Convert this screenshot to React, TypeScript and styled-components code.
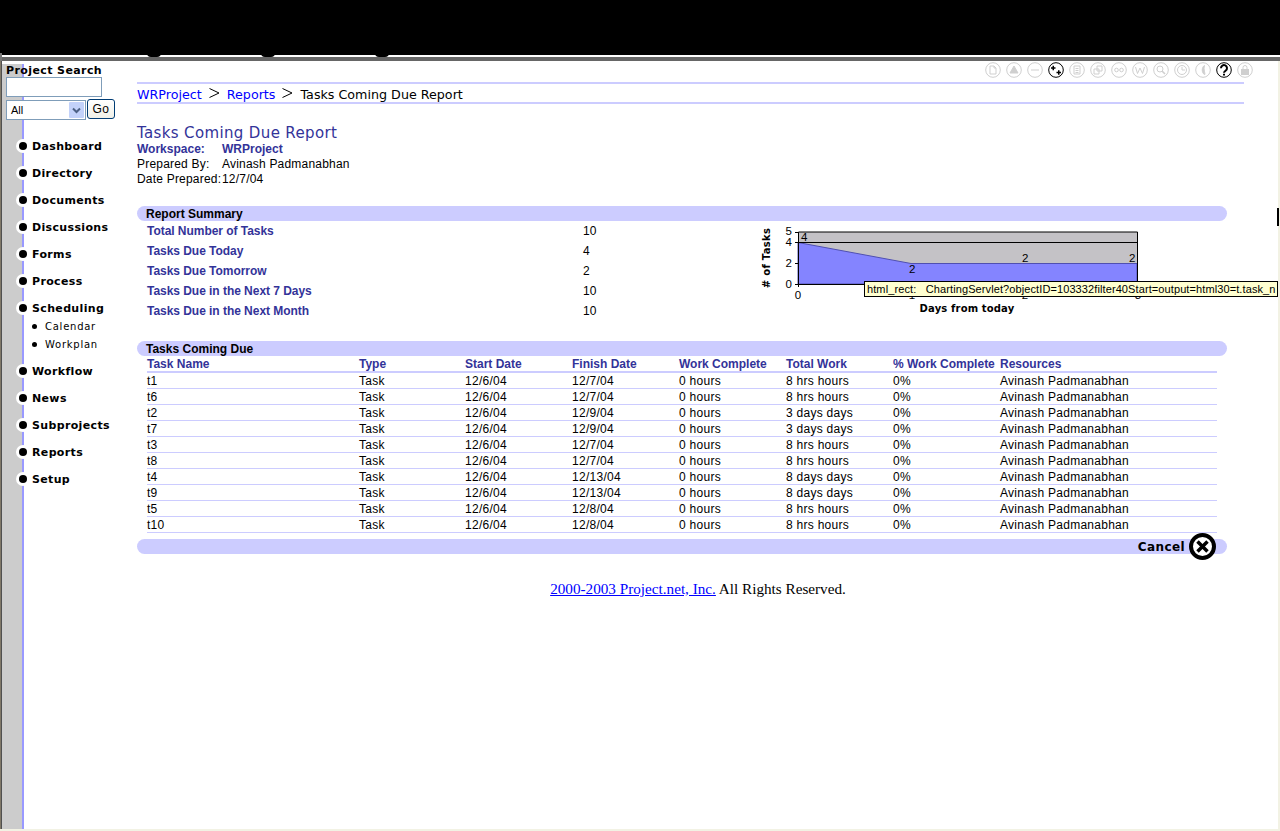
import React from "react";
import styled, { createGlobalStyle } from "styled-components";

const Global = createGlobalStyle`
  html, body { margin: 0; padding: 0; background: #fff; overflow: hidden; }
  * { box-sizing: border-box; }
`;
const verdana = `"DejaVu Sans", Verdana, sans-serif`;
const arial = `"Liberation Sans", Arial, sans-serif`;

const Page = styled.div`
  width: 1280px; height: 831px; display: flex; flex-direction: column; position: relative; overflow: hidden; background: #fff;
`;
const Banner = styled.header`
  height: 61px; flex: none; position: relative;
  background: linear-gradient(#000 55px, #fff 55px 57px, #666 57px);
`;
const Hump = styled.span<{ $x: number }>`
  position: absolute; left: ${p => p.$x}px; top: 53px; width: 14px; height: 4px; background: #000; border-radius: 0 0 7px 7px;
`;
const EdgeStub = styled.span`
  position: absolute; left: 0; top: 53px; width: 2px; height: 8px; background: #777;
`;
const Body = styled.div`
  flex: 1; display: flex; min-height: 0; border-right: 2px solid #f2f2e4; border-bottom: 2px solid #f2f2e4;
`;
const Nav = styled.nav`
  width: 137px; flex: none; padding: 3px 0 0 6px;
  background:
    linear-gradient(90deg, #807868 1px, #505050 1px 2px, transparent 2px),
    linear-gradient(#fff 3px, transparent 3px),
    linear-gradient(90deg, #ccc 22px, #99f 22px 24px, #fff 24px);
`;
const SearchTitle = styled.div`
  font: bold 11px/13px ${verdana}; color: #000; letter-spacing: 0.4px; white-space: nowrap;
`;
const SearchInput = styled.input`
  display: block; width: 96px; height: 20px; border: 1px solid #7f9db9; background: #fff; padding: 0; margin: 0; border-radius: 0; outline: none;
`;
const SearchRow = styled.div`
  display: flex; align-items: flex-start; gap: 1px; margin-top: 2px;
`;
const FakeSelect = styled.div`
  width: 80px; height: 20px; border: 1px solid #7f9db9; background: #fff; display: flex; align-items: center; justify-content: space-between; margin-top: 1px; padding: 1px 0 1px 4px;
  font: 11px ${arial}; color: #000;
`;
const SelectArrow = styled.span`
  width: 15px; height: 16px; margin-right: 1px; background: #c3d2fa; border-radius: 1px; display: flex; align-items: center; justify-content: center;
`;
const GoButton = styled.button`
  width: 28px; height: 20px; padding: 0; border: 1px solid #003c74; border-radius: 3px; background: linear-gradient(#fff, #f0f0e8);
  font: 12px ${arial}; letter-spacing: 0.4px; color: #000;
`;
const NavList = styled.ul`
  list-style: none; margin: 13px 0 0 -6px; padding: 0;
`;
const NavItem = styled.li`
  height: 27px; display: flex; align-items: center; position: relative; padding-left: 32px;
  font: bold 11px ${verdana}; letter-spacing: 0.35px; color: #000; white-space: nowrap;
  &::before { content: ""; position: absolute; left: 16px; top: 6px; width: 14px; height: 14px; border-radius: 50%; background: #fff; }
  &::after { content: ""; position: absolute; left: 19px; top: 9px; width: 8px; height: 8px; border-radius: 50%; background: #000; }
`;
const SubItem = styled.li`
  height: 18px; display: flex; align-items: center; position: relative; padding-left: 45px;
  font: 10px ${verdana}; letter-spacing: 0.75px; color: #000; white-space: nowrap;
  &::after { content: ""; position: absolute; left: 32px; top: 7px; width: 5px; height: 5px; border-radius: 50%; background: #000; }
`;
const SubGroup = styled.div`
  margin-top: -5px; margin-bottom: 5px;
`;
const Main = styled.main`
  flex: 1; min-width: 0; display: flex; flex-direction: column; position: relative;
`;
const IconBar = styled.div`
  height: 21px; width: 1116px; display: flex; justify-content: flex-end; align-items: flex-start; gap: 5px; padding-top: 1px;
`;
const Crumbs = styled.div`
  width: 1107px; height: 22px; border-top: 2px solid #ccf; border-bottom: 2px solid #ccf; display: flex; align-items: center; gap: 7px; padding-top: 2px;
  font: 12.7px ${verdana}; white-space: nowrap;
  color: #000;
`;
const CrumbLink = styled.a`
  color: #00f; text-decoration: none;
`;
const Sep = styled.svg`
  display: block; flex: none; width: 11px; height: 10px; margin-top: -2px; fill: none; stroke: #000;
`;
const Title = styled.h1`
  margin: 20px 0 0; font: 15px/18px ${verdana}; color: #333399; letter-spacing: 0.36px;
`;
const Meta = styled.div`
  display: grid; grid-template-columns: 85px 1fr; grid-auto-rows: 15px; font: 12px/15px ${arial}; margin-top: 0; letter-spacing: 0.2px; margin-bottom: 19px; white-space: nowrap;
`;
const MetaStrong = styled.div`
  font-weight: bold; color: #333399; letter-spacing: 0;
`;
const MetaCell = styled.div`
  color: #000;
`;
const Bar = styled.div`
  width: 1090px; height: 15px; border-radius: 8px; background: #ccf; padding-left: 9px; font: bold 12px/17px ${arial}; color: #000; flex: none; position: relative;
`;
const Summary = styled.section`
  display: flex; height: 120px; width: 1090px; position: relative;
`;
const SummaryList = styled.div`
  padding: 0 0 0 10px; width: 620px; flex: none;
`;
const SummaryRow = styled.div`
  display: grid; grid-template-columns: 436px 1fr; height: 20px; align-items: center; font: 12px/20px ${arial};
  letter-spacing: 0.2px;
`;
const SummaryLabel = styled.div`
  font-weight: bold; color: #333399; letter-spacing: -0.04px;
`;
const ChartBox = styled.div`
  position: relative; flex: none; margin-top: 3px;
`;
const Tip = styled.div`
  position: absolute; left: 107px; top: 57px; width: 414px; height: 16px; background: #ffffd0; border: 1px solid #000;
  font: 11px/14px ${arial}; letter-spacing: 0.1px; color: #000; padding-left: 2px; white-space: pre; overflow: hidden;
`;
const Grid = styled.div`
  margin-left: 10px; width: 1070px; display: grid; grid-template-columns: 212px 106px 107px 107px 107px 107px 107px 1fr;
`;
const HeadCell = styled.div`
  font: bold 12px/16px ${arial}; color: #333399; height: 17px; border-bottom: 2px solid #ccf; white-space: nowrap;
`;
const Cell = styled.div`
  font: 12px/17px ${arial}; letter-spacing: 0.27px; color: #000; height: 16px; border-bottom: 1px solid #ccf; white-space: nowrap;
`;
const CancelBar = styled(Bar)`
  margin-top: 6px; padding: 0;
`;
const CancelLink = styled.div`
  position: absolute; right: 11px; top: -6px; display: flex; align-items: flex-start; gap: 4px;
  font: bold 12px/29px ${verdana}; letter-spacing: 0.4px; color: #000;
`;
const Footer = styled.footer`
  width: 1122px; margin-top: 26px; text-align: center; font: 15.2px/18px "Liberation Serif", "Times New Roman", serif; color: #000;
`;
const FootLink = styled.a`
  color: #00f; text-decoration: underline;
`;
const Caret = styled.span`
  position: absolute; left: 1277px; top: 208px; width: 2px; height: 18px; background: #000;
`;

const S = styled.svg`
  display: block; flex: none; width: 16px; height: 16px; fill: none; stroke: currentColor;
`;
const IconWrap = styled.span<{ $on?: boolean }>`
  display: block; color: ${p => (p.$on ? "#000" : "#cfcfcf")};
`;
const glyphs: React.ReactNode[] = [
  <path d="M5 4h4l2 2v6H5zM9 4v2h2" />,
  <path d="M8 4l4 7H4z" fill="currentColor" />,
  <path d="M4 8h8" />,
  <path d="M3 6h4.500M5.250 3.700v4.600M8.500 10.500h4.500M10.750 8.200v4.600" strokeWidth="1.5" />,
  <path d="M5 4h6v8H5zM6.500 6.500h3M6.500 8.500h3M6.500 10.500h3" />,
  <path d="M7 4h5v5H7zM4 7h5v5H4z" />,
  <><circle cx="5.500" cy="8" r="1.800" /><circle cx="10.500" cy="8" r="1.800" /></>,
  <path d="M3.500 5l2 6.500L8 6l2.500 5.500L12.500 5" />,
  <><circle cx="7" cy="7" r="3" /><path d="M9 9l3 3" strokeWidth="1.600" /></>,
  <><circle cx="8" cy="8" r="4.500" /><path d="M8 5v3h3" /></>,
  <path d="M9.500 3.500C6.500 5 6.500 11 9.500 12.500C11 13 8 8 9.500 3.500Z" fill="currentColor" />,
  <path d="M5 6.200a3 3 0 1 1 4.800 2.300C8.500 9.500 8 9.800 8 10.800M8 11.800v1.700" strokeWidth="2" />,
  <><rect x="4.500" y="7.500" width="7" height="5" fill="currentColor" /><path d="M6 7.500V5.500a2 2 0 0 1 4 0v2" /></>,
];
const activeIcons = [3, 11];

const rows = [
  ["t1", "12/7/04", "8 hrs hours"], ["t6", "12/7/04", "8 hrs hours"], ["t2", "12/9/04", "3 days days"], ["t7", "12/9/04", "3 days days"],
  ["t3", "12/7/04", "8 hrs hours"], ["t8", "12/7/04", "8 hrs hours"], ["t4", "12/13/04", "8 days days"], ["t9", "12/13/04", "8 days days"],
  ["t5", "12/8/04", "8 hrs hours"], ["t10", "12/8/04", "8 hrs hours"],
];
const heads = ["Task Name", "Type", "Start Date", "Finish Date", "Work Complete", "Total Work", "% Work Complete", "Resources"];
const summary: [string, string][] = [
  ["Total Number of Tasks", "10"], ["Tasks Due Today", "4"], ["Tasks Due Tomorrow", "2"], ["Tasks Due in the Next 7 Days", "10"], ["Tasks Due in the Next Month", "10"],
];

const Chart = () => (
  <svg width="400" height="90" viewBox="0 0 400 90" style={{ display: "block" }}>
    <g transform="translate(-757,-224)">
      <rect x="798" y="232" width="339" height="52" fill="#c4c2c6" />
      <path d="M798 242.500L911 263.500H1137V284H798Z" fill="#8484ff" stroke="#5050b0" strokeWidth="1" />
      <path d="M798 242.500H1137" stroke="#000" />
      <path d="M798.500 232V284.500H1137.500V232H798.500" stroke="#000" fill="none" />
      <path d="M795 232.500h4M795 242.500h4M795 263.500h4M795 284.500h4M798.500 284v3M911.500 284v3M1024.500 284v3M1137.500 284v3" stroke="#000" />
      <g fontFamily="Liberation Sans" fontSize="11.500" fill="#000">
        <text x="792" y="235" textAnchor="end">5</text>
        <text x="792" y="246" textAnchor="end">4</text>
        <text x="792" y="267" textAnchor="end">2</text>
        <text x="792" y="288" textAnchor="end">0</text>
        <text x="798" y="299" textAnchor="middle">0</text>
        <text x="912" y="299" textAnchor="middle">1</text>
        <text x="1025" y="299" textAnchor="middle">2</text>
        <text x="1138" y="299" textAnchor="middle">3</text>
        <text x="801" y="241">4</text>
        <text x="909" y="273">2</text>
        <text x="1022" y="262">2</text>
        <text x="1129" y="262">2</text>
      </g>
      <g fontFamily="DejaVu Sans" fontWeight="bold" fontSize="10" fill="#000">
        <text x="967" y="312" textAnchor="middle" letterSpacing="0.15">Days from today</text>
        <text transform="translate(770,258) rotate(-90)" textAnchor="middle" letterSpacing="0.3">{"# of Tasks"}</text>
      </g>
    </g>
  </svg>
);

const Chevron = () => (
  <Sep viewBox="0 0 11 10"><path d="M0.500 0.500L10 5L0.500 9.500" /></Sep>
);

export default function App() {
  return (
    <Page>
      <Global />
      <Banner>
        <EdgeStub />
        <Hump $x={147} /><Hump $x={261} /><Hump $x={375} />
      </Banner>
      <Body>
        <Nav>
          <SearchTitle>Project Search</SearchTitle>
          <SearchInput aria-label="Project Search" />
          <SearchRow>
            <FakeSelect>All
              <SelectArrow>
                <svg width="9" height="7" viewBox="0 0 9 7"><path d="M1 1.500L4.500 5L8 1.500" fill="none" stroke="#4d6185" strokeWidth="2" /></svg>
              </SelectArrow>
            </FakeSelect>
            <GoButton>Go</GoButton>
          </SearchRow>
          <NavList>
            {["Dashboard", "Directory", "Documents", "Discussions", "Forms", "Process", "Scheduling"].map(n => <NavItem key={n}>{n}</NavItem>)}
            <SubGroup>
              <SubItem>Calendar</SubItem>
              <SubItem>Workplan</SubItem>
            </SubGroup>
            {["Workflow", "News", "Subprojects", "Reports", "Setup"].map(n => <NavItem key={n}>{n}</NavItem>)}
          </NavList>
        </Nav>
        <Main>
          <IconBar>
            {glyphs.map((g, i) => (
              <IconWrap key={i} $on={activeIcons.includes(i)}>
                <S viewBox="0 0 16 16"><circle cx="8" cy="8" r="7.300" />{g}</S>
              </IconWrap>
            ))}
          </IconBar>
          <Crumbs>
            <CrumbLink href="#">WRProject</CrumbLink><Chevron />
            <CrumbLink href="#">Reports</CrumbLink><Chevron />
            <span>Tasks Coming Due Report</span>
          </Crumbs>
          <Title>Tasks Coming Due Report</Title>
          <Meta>
            <MetaStrong>Workspace:</MetaStrong><MetaStrong>WRProject</MetaStrong>
            <MetaCell>Prepared By:</MetaCell><MetaCell>Avinash Padmanabhan</MetaCell>
            <MetaCell>Date Prepared:</MetaCell><MetaCell>12/7/04</MetaCell>
          </Meta>
          <Bar>Report Summary</Bar>
          <Summary>
            <SummaryList>
              {summary.map(([l, v]) => (
                <SummaryRow key={l}><SummaryLabel>{l}</SummaryLabel><div>{v}</div></SummaryRow>
              ))}
            </SummaryList>
            <ChartBox>
              <Chart />
              <Tip>{"html_rect:   ChartingServlet?objectID=103332filter40Start=output=html30=t.task_n"}</Tip>
            </ChartBox>
          </Summary>
          <Bar>Tasks Coming Due</Bar>
          <Grid>
            {heads.map(h => <HeadCell key={h}>{h}</HeadCell>)}
            {rows.map(([name, finish, total]) => (
              <React.Fragment key={name}>
                <Cell>{name}</Cell><Cell>Task</Cell><Cell>12/6/04</Cell><Cell>{finish}</Cell><Cell>0 hours</Cell><Cell>{total}</Cell><Cell>0%</Cell><Cell>Avinash Padmanabhan</Cell>
              </React.Fragment>
            ))}
          </Grid>
          <CancelBar>
            <CancelLink>Cancel
              <svg width="27" height="27" viewBox="0 0 27 27">
                <circle cx="13.500" cy="13.500" r="11.500" fill="#fff" stroke="#000" strokeWidth="4" />
                <path d="M8.500 8.500l10 10M18.500 8.500l-10 10" stroke="#000" strokeWidth="3.500" />
              </svg>
            </CancelLink>
          </CancelBar>
          <Footer><FootLink href="#">2000-2003 Project.net, Inc.</FootLink> All Rights Reserved.</Footer>
        </Main>
      </Body>
      <Caret />
    </Page>
  );
}
